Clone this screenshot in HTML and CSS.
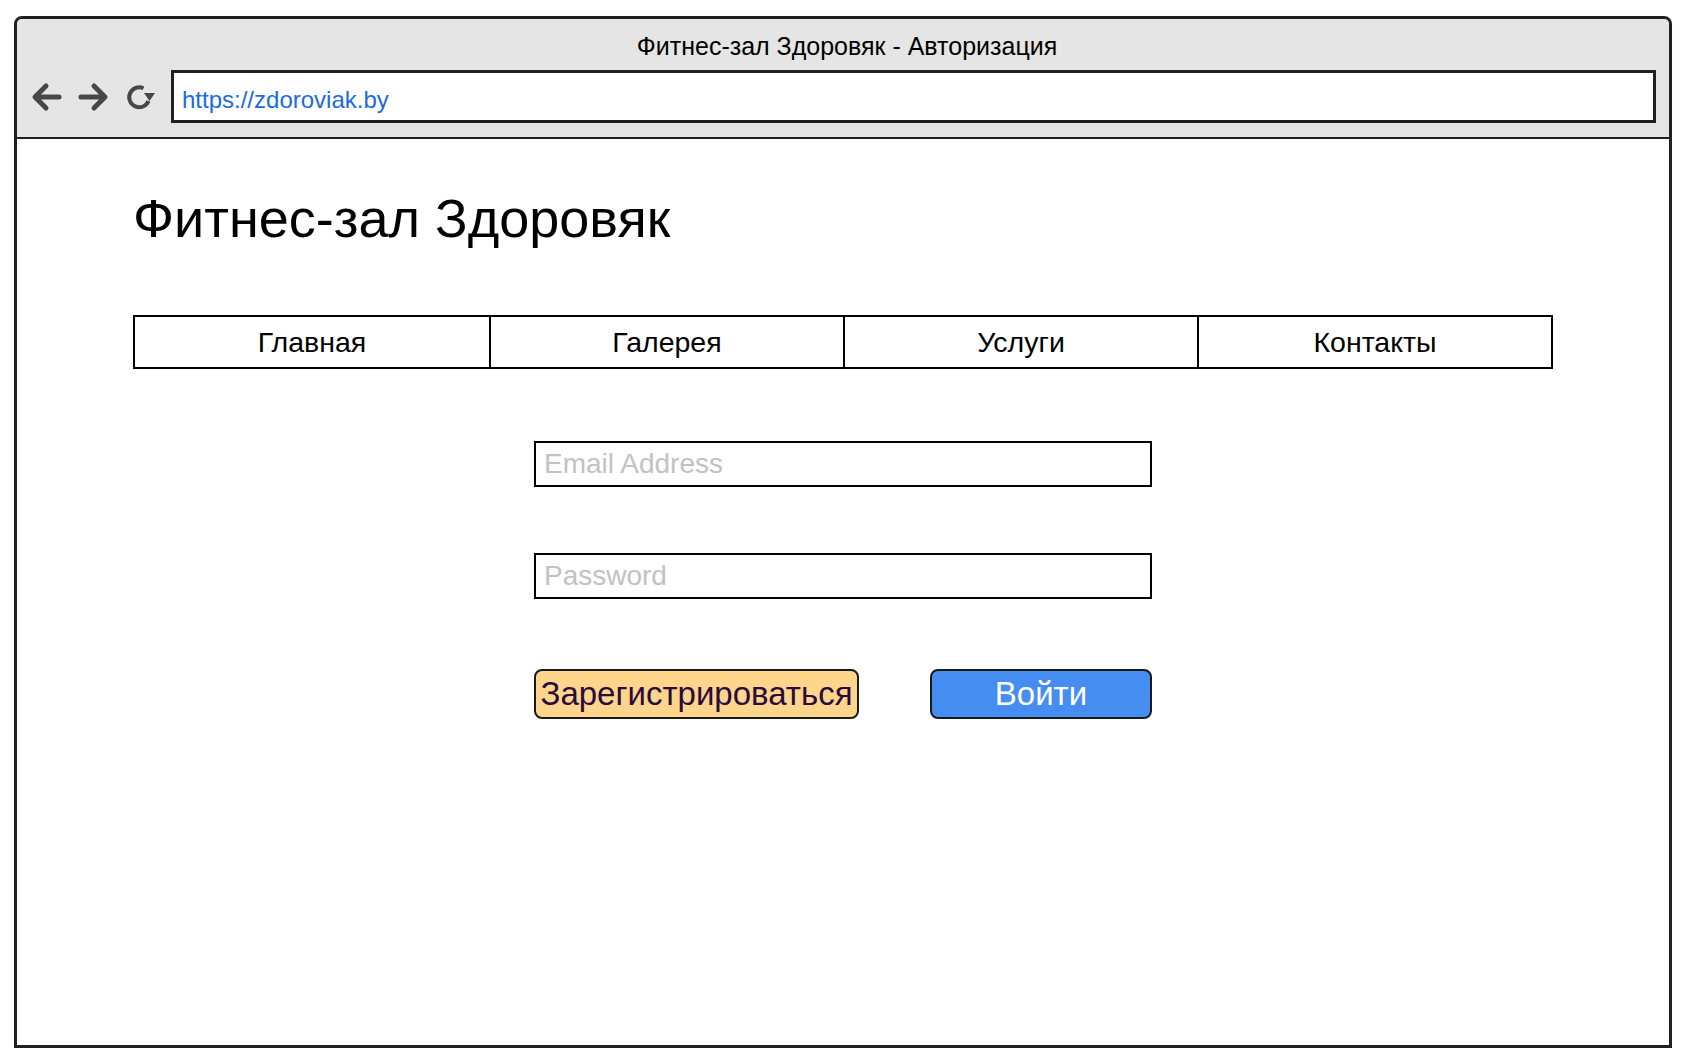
FILE: index.html
```html
<!DOCTYPE html>
<html lang="ru">
<head>
<meta charset="utf-8">
<title>Фитнес-зал Здоровяк - Авторизация</title>
<link rel="stylesheet" href="styles.css">
</head>
<body>
<div class="window">
  <div class="toolbar">
    <div class="win-title">Фитнес-зал Здоровяк - Авторизация</div>
    <div class="addr-row">
      <svg class="icon icon-back" width="32" height="30" viewBox="0 0 32 30">
        <path d="M28 15 H5 M15 4 L4 15 L15 26" fill="none" stroke="#474747" stroke-width="5" stroke-linecap="round" stroke-linejoin="round"/>
      </svg>
      <svg class="icon icon-fwd" width="32" height="30" viewBox="0 0 32 30">
        <path d="M4 15 H27 M17 4 L28 15 L17 26" fill="none" stroke="#474747" stroke-width="5" stroke-linecap="round" stroke-linejoin="round"/>
      </svg>
      <svg class="icon icon-reload" width="32" height="30" viewBox="0 0 32 30">
        <path d="M19.5 6.2 A10 10 0 1 0 24.5 19" fill="none" stroke="#474747" stroke-width="4"/>
        <path d="M20 11 L31 11 L25.5 19 Z" fill="#474747"/>
      </svg>
      <div class="address">https://zdoroviak.by</div>
    </div>
  </div>
  <div class="content">
    <h1 class="site-title">Фитнес-зал Здоровяк</h1>
    <nav class="menu">
      <a class="menu-item">Главная</a>
      <a class="menu-item">Галерея</a>
      <a class="menu-item">Услуги</a>
      <a class="menu-item">Контакты</a>
    </nav>
    <form class="login">
      <input class="field" type="email" placeholder="Email Address">
      <input class="field" type="password" placeholder="Password">
      <div class="actions">
        <button type="button" class="btn btn-register">Зарегистрироваться</button>
        <button type="button" class="btn btn-login">Войти</button>
      </div>
    </form>
  </div>
</div>
</body>
</html>
```

FILE: styles.css
```css
* { box-sizing: border-box; }

html, body {
  margin: 0;
  padding: 0;
  background: #ffffff;
}

body {
  font-family: "Liberation Sans", Arial, Helvetica, sans-serif;
  color: #000;
}

.window {
  margin: 16px 0 0 14px;
  width: 1658px;
  height: 1032px;
  border: 3px solid #231f20;
  border-radius: 8px 8px 0 0;
  display: flex;
  flex-direction: column;
  overflow: hidden;
}

.toolbar {
  background: #e5e5e5;
  height: 120px;
  border-bottom: 2px solid #231f20;
  display: flex;
  flex-direction: column;
}

.win-title {
  padding-top: 13px;
  padding-left: 8px;
  font-size: 25px;
  line-height: 28px;
  text-align: center;
  color: #000;
}

.addr-row {
  display: flex;
  align-items: center;
  margin-top: 10px;
  padding-left: 14px;
  padding-right: 13px;
}

.icon { flex: none; display: block; }
.icon-back { margin-right: 14px; }
.icon-fwd { margin-right: 15px; }
.icon-reload { margin-right: 15px; }

.address {
  flex: 1;
  height: 53px;
  border: 3px solid #231f20;
  background: #fff;
  color: #1c6be0;
  font-size: 24px;
  line-height: 40px;
  padding: 7px 0 0 8px;
}

.content {
  flex: 1;
  padding: 51px 116px 0;
}

.site-title {
  margin: 0;
  font-size: 54px;
  line-height: 56px;
  font-weight: normal;
}

.menu {
  margin-top: 69px;
  display: grid;
  grid-template-columns: repeat(4, 1fr);
  height: 54px;
  border: 2px solid #000;
}

.menu-item {
  display: flex;
  align-items: center;
  justify-content: center;
  font-size: 28.5px;
  color: #000;
  border-left: 2px solid #000;
}
.menu-item:first-child { border-left: none; }

.login {
  width: 618px;
  margin: 72px auto 0;
  display: flex;
  flex-direction: column;
}

.field {
  height: 46px;
  border: 2px solid #000;
  padding: 0 8px;
  font-family: "Liberation Sans", Arial, Helvetica, sans-serif;
  font-size: 28px;
  outline: none;
  background: #fff;
  margin: 0 0 66px;
}
.field:nth-of-type(2) { margin-bottom: 70px; }
.field::placeholder { color: #c2c2c2; }

.actions {
  display: flex;
  justify-content: space-between;
}

.btn {
  height: 50px;
  border: 2px solid #1a1a1a;
  border-radius: 8px;
  font-family: "Liberation Sans", Arial, Helvetica, sans-serif;
  font-size: 33px;
  padding: 0;
}

.btn-register {
  width: 325px;
  background: #fdd68b;
  color: #2b0a3d;
}

.btn-login {
  width: 222px;
  background: #458df0;
  color: #fff;
}
```
